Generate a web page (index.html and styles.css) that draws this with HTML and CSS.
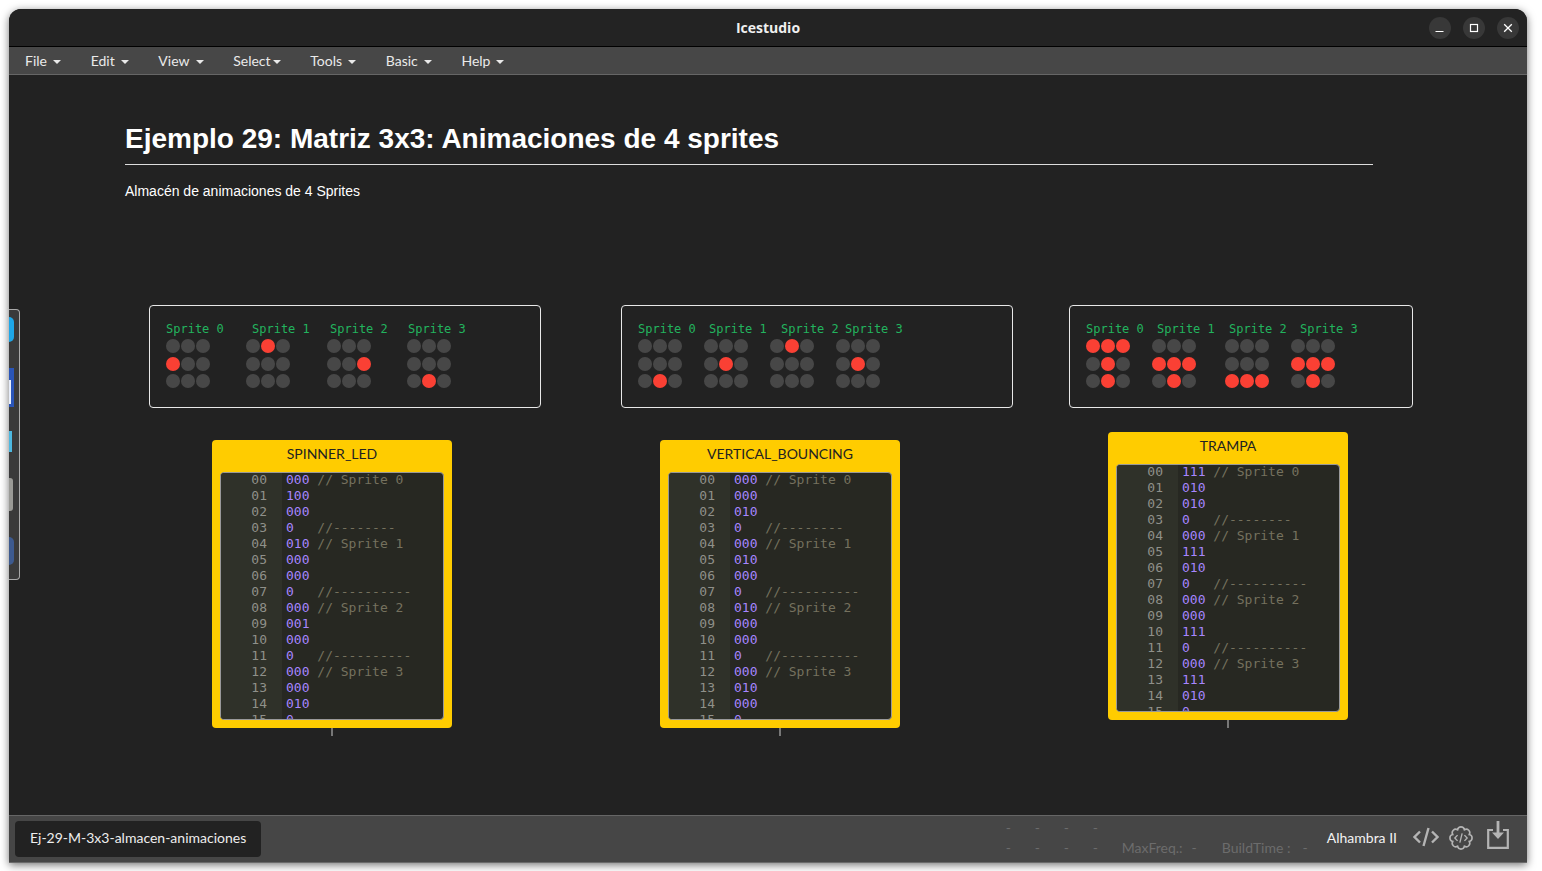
FILE: index.html
```html
<!DOCTYPE html>
<html lang="es">
<head>
<meta charset="utf-8">
<title>Icestudio</title>
<link rel="stylesheet" href="styles.css">
</head>
<body>
<div class="window">
  <header class="titlebar">
    <span class="app-title">Icestudio</span>
    <div class="win-buttons">
      <span class="win-btn"><svg width="12" height="12" viewBox="0 0 12 12"><path d="M1.5 9.5h8" stroke="#fff" stroke-width="1.2" fill="none"/></svg></span>
      <span class="win-btn"><svg width="12" height="12" viewBox="0 0 12 12"><rect x="2.5" y="2.5" width="7" height="7" stroke="#fff" stroke-width="1.2" fill="none"/></svg></span>
      <span class="win-btn"><svg width="12" height="12" viewBox="0 0 12 12"><path d="M2.2 2.2l7.6 7.6M9.8 2.2l-7.6 7.6" stroke="#fff" stroke-width="1.3" fill="none"/></svg></span>
    </div>
  </header>
  <nav class="menubar">
    <span class="menu-item">File<i class="caret"></i></span>
    <span class="menu-item">Edit<i class="caret"></i></span>
    <span class="menu-item">View<i class="caret"></i></span>
    <span class="menu-item">Select<i class="caret tight"></i></span>
    <span class="menu-item">Tools<i class="caret"></i></span>
    <span class="menu-item">Basic<i class="caret"></i></span>
    <span class="menu-item">Help<i class="caret"></i></span>
  </nav>
  <main class="canvas">
    <section class="node info">
      <h1 class="info-title">Ejemplo 29: Matriz 3x3: Animaciones de 4 sprites</h1>
      <p class="info-text">Almacén de animaciones de 4 Sprites</p>
    </section>

    <section class="node panel panel-a">
      <div class="labels"><span>Sprite 0</span><span>Sprite 1</span><span>Sprite 2</span><span>Sprite 3</span></div>
      <div class="leds">
        <div class="matrix"><i></i><i></i><i></i><i class="on"></i><i></i><i></i><i></i><i></i><i></i></div>
        <div class="matrix"><i></i><i class="on"></i><i></i><i></i><i></i><i></i><i></i><i></i><i></i></div>
        <div class="matrix"><i></i><i></i><i></i><i></i><i></i><i class="on"></i><i></i><i></i><i></i></div>
        <div class="matrix"><i></i><i></i><i></i><i></i><i></i><i></i><i></i><i class="on"></i><i></i></div>
      </div>
    </section>

    <section class="node panel panel-b">
      <div class="labels"><span>Sprite 0</span><span>Sprite 1</span><span>Sprite 2</span><span>Sprite 3</span></div>
      <div class="leds">
        <div class="matrix"><i></i><i></i><i></i><i></i><i></i><i></i><i></i><i class="on"></i><i></i></div>
        <div class="matrix"><i></i><i></i><i></i><i></i><i class="on"></i><i></i><i></i><i></i><i></i></div>
        <div class="matrix"><i></i><i class="on"></i><i></i><i></i><i></i><i></i><i></i><i></i><i></i></div>
        <div class="matrix"><i></i><i></i><i></i><i></i><i class="on"></i><i></i><i></i><i></i><i></i></div>
      </div>
    </section>

    <section class="node panel panel-c">
      <div class="labels"><span>Sprite 0</span><span>Sprite 1</span><span>Sprite 2</span><span>Sprite 3</span></div>
      <div class="leds">
        <div class="matrix"><i class="on"></i><i class="on"></i><i class="on"></i><i></i><i class="on"></i><i></i><i></i><i class="on"></i><i></i></div>
        <div class="matrix"><i></i><i></i><i></i><i class="on"></i><i class="on"></i><i class="on"></i><i></i><i class="on"></i><i></i></div>
        <div class="matrix"><i></i><i></i><i></i><i></i><i></i><i></i><i class="on"></i><i class="on"></i><i class="on"></i></div>
        <div class="matrix"><i></i><i></i><i></i><i class="on"></i><i class="on"></i><i class="on"></i><i></i><i class="on"></i><i></i></div>
      </div>
    </section>

    <section class="node block block-a">
      <h2 class="block-name">SPINNER_LED</h2>
      <div class="editor">
        <pre class="gutter">00
01
02
03
04
05
06
07
08
09
10
11
12
13
14
15</pre>
        <pre class="code">000 <em>// Sprite 0</em>
100
000
0   <em>//--------</em>
010 <em>// Sprite 1</em>
000
000
0   <em>//----------</em>
000 <em>// Sprite 2</em>
001
000
0   <em>//----------</em>
000 <em>// Sprite 3</em>
000
010
0</pre>
      </div>
      <span class="stub"></span>
    </section>

    <section class="node block block-b">
      <h2 class="block-name">VERTICAL_BOUNCING</h2>
      <div class="editor">
        <pre class="gutter">00
01
02
03
04
05
06
07
08
09
10
11
12
13
14
15</pre>
        <pre class="code">000 <em>// Sprite 0</em>
000
010
0   <em>//--------</em>
000 <em>// Sprite 1</em>
010
000
0   <em>//----------</em>
010 <em>// Sprite 2</em>
000
000
0   <em>//----------</em>
000 <em>// Sprite 3</em>
010
000
0</pre>
      </div>
      <span class="stub"></span>
    </section>

    <section class="node block block-c">
      <h2 class="block-name">TRAMPA</h2>
      <div class="editor">
        <pre class="gutter">00
01
02
03
04
05
06
07
08
09
10
11
12
13
14
15</pre>
        <pre class="code">111 <em>// Sprite 0</em>
010
010
0   <em>//--------</em>
000 <em>// Sprite 1</em>
111
010
0   <em>//----------</em>
000 <em>// Sprite 2</em>
000
111
0   <em>//----------</em>
000 <em>// Sprite 3</em>
111
010
0</pre>
      </div>
      <span class="stub"></span>
    </section>
  </main>
  <footer class="statusbar">
    <span class="tab">Ej-29-M-3x3-almacen-animaciones</span>
    <div class="stats">
      <div class="stat-row"><span>-</span><span>-</span><span>-</span><span>-</span></div>
      <div class="stat-row"><span>-</span><span>-</span><span>-</span><span>-</span>
        <span class="stat-name freq">MaxFreq.:</span><span class="stat-val">-</span>
        <span class="stat-name build">BuildTime :</span><span class="stat-val last">-</span>
      </div>
    </div>
    <span class="board">Alhambra II</span>
    <div class="tools">
      <svg class="tool-code" width="26" height="22" viewBox="0 0 26 22"><path d="M7 5.5L1.5 11L7 16.5M19 5.5L24.5 11L19 16.5M15.5 2L10.5 20" stroke="#b4b4b4" stroke-width="2.4" fill="none"/></svg>
      <svg class="tool-gear" width="24" height="24" viewBox="1.5 1.5 21 21"><path d="M19.2 15A3.05 3.05 0 0 1 15 19.2A3.05 3.05 0 0 1 9 19.2A3.05 3.05 0 0 1 4.8 15A3.05 3.05 0 0 1 4.8 9A3.05 3.05 0 0 1 9 4.8A3.05 3.05 0 0 1 15 4.8A3.05 3.05 0 0 1 19.2 9A3.05 3.05 0 0 1 19.2 15Z" stroke="#b4b4b4" stroke-width="1.4" fill="none"/><path d="M9 9.5L6.6 12L9 14.5M15 9.5L17.4 12L15 14.5M13 8L11 16" stroke="#b4b4b4" stroke-width="1.2" fill="none"/></svg>
      <svg class="tool-save" width="22" height="28" viewBox="0 0 22 28"><path d="M6 9H1.2V26.8H20.8V9H16" stroke="#b4b4b4" stroke-width="2.2" fill="none"/><path d="M9.6 0H12.4V11.5H17L11 18L5 11.5H9.6Z" fill="#b4b4b4"/></svg>
    </div>
  </footer>
  <aside class="dock">
    <span class="dock-icon d1"></span>
    <span class="dock-icon d2"></span>
    <span class="dock-icon d3"></span>
    <span class="dock-icon d4"></span>
    <span class="dock-icon d5"></span>
  </aside>
</div>
</body>
</html>
```
FILE: styles.css
```css
* { box-sizing: border-box; }
html, body { margin: 0; height: 100%; }
body {
  background: #fff;
  padding: 9px 15px 8px 9px;
  overflow: hidden;
  font-family: Lato, "Liberation Sans", sans-serif;
}
.window {
  position: relative;
  height: 100%;
  display: flex;
  flex-direction: column;
  background: #222;
  border-radius: 12px 12px 0 0;
  box-shadow: 0 2px 8px rgba(0, 0, 0, .55);
  overflow: hidden;
}

/* title bar */
.titlebar {
  flex: 0 0 38px;
  position: relative;
  display: flex;
  align-items: center;
  justify-content: center;
  background: #232323;
  border-bottom: 1px solid #000;
}
.app-title { color: #f0f0f0; font: 700 14px "Open Sans", sans-serif; }
.win-buttons { position: absolute; right: 8px; top: 8px; display: flex; gap: 12px; }
.win-btn {
  width: 22px; height: 22px; border-radius: 50%;
  background: #383838;
  display: flex; align-items: center; justify-content: center;
}

/* menu */
.menubar {
  flex: 0 0 28px;
  display: flex;
  align-items: center;
  gap: 29.7px;
  padding: 0 0 0 16px;
  background: #474747;
  border-bottom: 1px solid #666;
  color: #eaeaea;
  font-size: 14px;
}
.menu-item { display: flex; align-items: center; }
.caret {
  margin: 2px 0 0 6px;
  width: 0; height: 0;
  border-left: 4px solid transparent;
  border-right: 4px solid transparent;
  border-top: 4px solid #eaeaea;
}
.caret.tight { margin-left: 2px; }

/* canvas */
.canvas { flex: 1; position: relative; background: #222; overflow: hidden; }
.node { position: absolute; }

.info { left: 116px; top: 45px; width: 1248px; color: #fff; font-family: "Liberation Sans", sans-serif; }
.info-title {
  margin: 0;
  height: 45px;
  padding-top: 2px;
  font-size: 28px;
  line-height: 34px;
  font-weight: 700;
  border-bottom: 1px solid #ddd;
}
.info-text { margin: 16px 0 0; font-size: 14px; line-height: 20px; }

/* LED panels */
.panel {
  top: 230px;
  height: 103px;
  padding: 15px 0 0 16px;
  border: 1px solid #e8e8e8;
  border-radius: 4px;
  background: #222;
}
.panel-a { left: 140px; width: 392px; }
.panel-b { left: 612px; width: 392px; }
.panel-c { left: 1060px; width: 344px; }
.labels {
  display: grid;
  height: 17px;
  color: #22b35e;
  font: 12px/17px "DejaVu Sans Mono", monospace;
  white-space: pre;
}
.panel-a .labels { grid-template-columns: 86px 78px 78px 60px; }
.panel-b .labels { grid-template-columns: 71px 72px 64px 60px; }
.panel-c .labels { grid-template-columns: 71px 72px 71px 60px; }
.leds { display: grid; margin: 2px 0 0 1px; }
.panel-a .leds { grid-template-columns: 80.3px 80.3px 80.3px 43px; }
.panel-b .leds { grid-template-columns: 66px 66px 66px 43px; }
.panel-c .leds { grid-template-columns: 66px 73px 66px 43px; }
.matrix {
  display: grid;
  grid-template-columns: repeat(3, 13px);
  grid-template-rows: 18px 17px 13px;
  column-gap: 2px;
  width: 43px;
}
.matrix i {
  width: 14px; height: 14px; margin: -1px 0 0 -1px; border-radius: 50%;
  background: radial-gradient(circle at 50% 50%, #474747 0 72%, #2e2e2e 100%);
}
.matrix i.on {
  background: radial-gradient(circle at 50% 50%, #fa4034 0 72%, #a92e27 100%);
}

/* code blocks */
.block {
  width: 240px;
  height: 288px;
  padding: 0 8px 8px;
  display: flex;
  flex-direction: column;
  background: #ffcc00;
  border-radius: 4px;
}
.block-a { left: 203px; top: 365px; }
.block-b { left: 651px; top: 365px; }
.block-c { left: 1099px; top: 357px; }
.block-name {
  flex: 0 0 32px;
  margin: 0;
  color: #222;
  font-size: 14px;
  font-weight: 400;
  line-height: 28px;
  text-align: center;
}
.editor {
  flex: 1;
  min-height: 0;
  display: flex;
  overflow: hidden;
  background: #272822;
  border: 1px solid #999;
  border-radius: 4px;
  font: 13px/16px "DejaVu Sans Mono", monospace;
}
.gutter {
  flex: 0 0 61px;
  margin: -1px 0 0;
  padding: 0 15px 0 0;
  font: inherit;
  text-align: right;
  color: #8f908a;
  background: #2f3129;
}
.code { flex: 1; margin: -1px 0 0; padding: 0 0 0 4px; font: inherit; color: #a685ff; }
.code em { font-style: normal; color: #75715e; }
.stub { position: absolute; left: 119px; top: 288px; width: 2px; height: 8px; background: #777; }

/* status bar */
.statusbar {
  flex: 0 0 48px;
  position: relative;
  display: flex;
  align-items: center;
  padding: 0 18px 0 6px;
  background: #464646;
  border-top: 1px solid #666;
  border-bottom: 1px solid #6a6a6a;
}
.tab {
  height: 36px;
  padding: 0 15px 4px;
  display: flex;
  align-items: center;
  border-radius: 4px;
  background: #222;
  color: #eee;
  font-size: 14px;
  width: 246px;
  white-space: nowrap;
}
.stats {
  margin: -2px 0 0 auto;
  color: #6c6c6c;
  font-size: 14px;
  line-height: 20px;
  width: 312px;
}
.stat-row { display: flex; height: 20px; }
.stat-row > span { width: 29px; flex: none; }
.stat-row > .stat-name { width: auto; }
.stat-row > .stat-val { width: auto; }
.stat-val { margin-left: 9px; }
.stat-val.last { margin-left: 12px; }
.build { margin-left: 25px; }
.board { margin: -4px 0 0 9px; color: #f2f2f2; font-size: 14px; }
.tools { display: flex; align-items: center; margin-left: 16px; }
.tool-code { margin-top: -4px; }
.tool-gear { margin: -3px 0 0 10px; }
.tool-save { margin: -8px 0 0 14px; }

/* clipped dock over the window's left edge */
.dock {
  position: absolute;
  left: 0; top: 300px;
  width: 11px; height: 271px;
  background: #3a3a3a;
  border: 1px solid #aaa;
  border-left: 0;
  border-radius: 0 4px 4px 0;
  overflow: hidden;
}
.dock-icon { position: absolute; left: 0; display: block; }
.d1 { top: 7px; width: 5px; height: 25px; background: #1ea7e8; border-radius: 0 5px 5px 0; }
.d2 { top: 58px; width: 5px; height: 39px; background: #2a55b8; }
.d2::after { content: ""; position: absolute; left: 0; top: 12px; width: 2px; height: 24px; background: #e8eefa; }
.d3 { top: 121px; width: 3px; height: 21px; background: #4db8e0; }
.d4 { top: 168px; width: 4px; height: 33px; background: #9a9a96; border-radius: 0 3px 3px 0; }
.d5 { top: 227px; width: 5px; height: 28px; background: #3d5a8f; border-radius: 0 14px 14px 0; }
```
